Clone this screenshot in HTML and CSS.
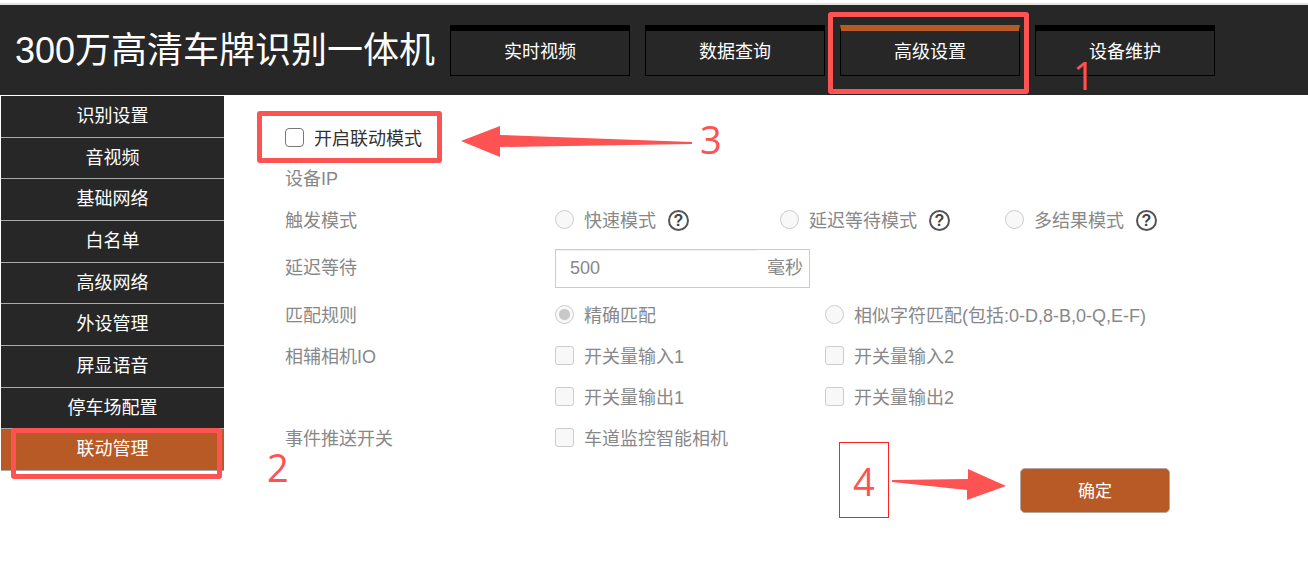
FILE: index.html
```html
<!DOCTYPE html>
<html lang="zh-CN">
<head>
  <meta charset="UTF-8">
  <title>300万高清车牌识别一体机</title>
  <link rel="stylesheet" href="styles.css">
</head>
<body>
  <div class="header">
    <div class="logo">300万高清车牌识别一体机</div>
    <div class="tabs">
      <div class="tab">实时视频</div>
      <div class="tab">数据查询</div>
      <div class="tab tab-active">高级设置</div>
      <div class="tab">设备维护</div>
    </div>
  </div>

  <div class="content">
    <div class="sidebar">
      <div class="side-item">识别设置</div>
      <div class="side-item">音视频</div>
      <div class="side-item">基础网络</div>
      <div class="side-item">白名单</div>
      <div class="side-item">高级网络</div>
      <div class="side-item">外设管理</div>
      <div class="side-item">屏显语音</div>
      <div class="side-item">停车场配置</div>
      <div class="side-item side-active">联动管理</div>
    </div>

    <div class="main">
      <div class="row row-enable">
        <label class="enable"><input type="checkbox" class="check-on">开启联动模式</label>
      </div>
      <div class="row row-ip"><div class="label">设备IP</div></div>
      <div class="row">
        <div class="label">触发模式</div>
        <div class="opt opt-mode"><input type="radio" class="radio" disabled>快速模式<span class="help">?</span></div>
        <div class="opt opt-mode"><input type="radio" class="radio" disabled>延迟等待模式<span class="help">?</span></div>
        <div class="opt opt-mode"><input type="radio" class="radio" disabled>多结果模式<span class="help">?</span></div>
      </div>
      <div class="row row-input">
        <div class="label">延迟等待</div>
        <div class="input-group">
          <div class="input-value">500</div>
          <div class="input-unit">毫秒</div>
        </div>
      </div>
      <div class="row">
        <div class="label">匹配规则</div>
        <div class="opt opt-wide"><input type="radio" class="radio" checked disabled>精确匹配</div>
        <div class="opt"><input type="radio" class="radio" disabled>相似字符匹配(包括:0-D,8-B,0-Q,E-F)</div>
      </div>
      <div class="row">
        <div class="label">相辅相机IO</div>
        <div class="opt opt-wide"><input type="checkbox" class="check" disabled>开关量输入1</div>
        <div class="opt"><input type="checkbox" class="check" disabled>开关量输入2</div>
      </div>
      <div class="row">
        <div class="label"></div>
        <div class="opt opt-wide"><input type="checkbox" class="check" disabled>开关量输出1</div>
        <div class="opt"><input type="checkbox" class="check" disabled>开关量输出2</div>
      </div>
      <div class="row">
        <div class="label">事件推送开关</div>
        <div class="opt"><input type="checkbox" class="check" disabled>车道监控智能相机</div>
      </div>
      <div class="actions"><button class="btn-ok">确定</button></div>
    </div>
  </div>

  <!-- 标注 -->
  <div class="mark-box box-1"></div>
  <div class="mark-box box-2"></div>
  <div class="mark-box box-3"></div>
  <div class="mark-box box-4"></div>
  <div class="mark-num num-1">1</div>
  <div class="mark-num num-2">2</div>
  <div class="mark-num num-3">3</div>
  <div class="mark-num num-4">4</div>
  <svg class="arrows" width="1308" height="576" viewBox="0 0 1308 576">
    <polygon points="461,141 500,126 500,135 692,142 692,144 500,147 500,157" fill="#fd5353"/>
    <polygon points="892,480 968,479 968,469 1006,486 967,500 967,490 892,482" fill="#fd5353"/>
  </svg>
</body>
</html>
```

FILE: styles.css
```css
* {
  box-sizing: border-box;
}

body {
  margin: 0;
  padding-top: 3px;
  font-family: "Liberation Sans", "Noto Sans CJK SC", sans-serif;
  font-size: 18px;
  background: #fff;
  color: #888;
}

.header {
  display: flex;
  align-items: flex-start;
  height: 92px;
  background: #272727;
  border-top: 2px solid #e2e2e2;
}

.logo {
  width: 450px;
  padding-left: 15px;
  height: 90px;
  line-height: 92px;
  font-size: 36px;
  color: #fff;
  white-space: nowrap;
}

.tabs {
  display: flex;
  gap: 15px;
  padding-top: 20px;
}

.tab {
  width: 180px;
  height: 51px;
  line-height: 42px;
  text-align: center;
  color: #fff;
  font-size: 18px;
  background: #272727;
  border: 1px solid #000;
  border-top: 6px solid #000;
}

.tab-active {
  border-top-color: #b85a26;
}

.content {
  display: flex;
  padding-top: 1px;
}

.sidebar {
  width: 223px;
  margin-left: 1px;
}

.side-item {
  height: 41.67px;
  line-height: 40px;
  text-align: center;
  color: #fff;
  font-size: 18px;
  background: #272727;
  border-bottom: 1px solid #aaa;
}

.side-active {
  background: #b85a26;
}

.main {
  padding: 21px 0 0 61px;
}

.row {
  display: flex;
  align-items: center;
  height: 41px;
}

.row-enable {
  height: 40px;
}

.row-ip {
  padding-bottom: 2px;
}

.row-input {
  height: 54px;
}

.label {
  width: 270px;
}

.enable {
  display: flex;
  align-items: center;
  color: #333;
}

.check-on {
  appearance: none;
  width: 19px;
  height: 19px;
  margin: 0 10px 0 0;
  background: #fff;
  border: 1.5px solid #767676;
  border-radius: 4px;
}

.opt {
  display: flex;
  align-items: center;
  white-space: nowrap;
}

.opt-mode {
  width: 225px;
}

.opt-wide {
  width: 270px;
}

.radio {
  appearance: none;
  flex: none;
  width: 19px;
  height: 19px;
  margin: 2px 10px 0 0;
  background: #f8f8f8;
  border: 1px solid #ccc;
  border-radius: 50%;
}

.radio:checked {
  background: radial-gradient(circle, #c8c8c8 0 5px, #f8f8f8 6px);
}

.check {
  appearance: none;
  flex: none;
  width: 19px;
  height: 19px;
  margin: 2px 10px 0 0;
  background: #f8f8f8;
  border: 1px solid #ccc;
  border-radius: 3px;
}

.help {
  width: 21px;
  height: 21px;
  margin: 3px 0 0 12px;
  line-height: 17px;
  text-align: center;
  font-size: 16px;
  font-weight: bold;
  color: #444;
  border: 2px solid #555;
  border-radius: 50%;
}

.input-group {
  display: flex;
  width: 255px;
  height: 39px;
  margin-top: 4px;
  line-height: 37px;
  border: 1px solid #ccc;
}

.input-value {
  flex: 1;
  padding-left: 14px;
  box-shadow: inset 0 1px 1px #f0f0f0;
}

.input-unit {
  width: 52px;
  padding-left: 10px;
  font-size: 18px;
  white-space: nowrap;
}

.actions {
  padding: 11px 0 0 735px;
}

.btn-ok {
  display: block;
  width: 150px;
  height: 45px;
  padding: 0 0 3px;
  font-family: inherit;
  font-size: 17px;
  color: #fff;
  background: #b85a26;
  border: 1px solid #b5a79e;
  border-radius: 5px;
}

/* 标注 */
.mark-box {
  position: absolute;
  border: 5px solid #fd5353;
  border-radius: 3px;
}

.box-1 {
  left: 828px;
  top: 12px;
  width: 201px;
  height: 82px;
}

.box-2 {
  left: 11px;
  top: 428px;
  width: 211px;
  height: 51px;
}

.box-3 {
  left: 257px;
  top: 111px;
  width: 185px;
  height: 52px;
}

.box-4 {
  left: 839px;
  top: 442px;
  width: 50px;
  height: 76px;
  border: 1px solid #f22;
  border-radius: 0;
}

.mark-num {
  position: absolute;
  font-family: "Open Sans", sans-serif;
  font-weight: 400;
  font-size: 38px;
  line-height: 40px;
  color: #fd5353;
}

.num-1 {
  left: 1073px;
  top: 55px;
}

.num-2 {
  left: 267px;
  top: 447px;
}

.num-3 {
  left: 700px;
  top: 119px;
}

.num-4 {
  left: 853px;
  top: 461px;
}

.arrows {
  position: absolute;
  left: 0;
  top: 0;
  pointer-events: none;
}
```
